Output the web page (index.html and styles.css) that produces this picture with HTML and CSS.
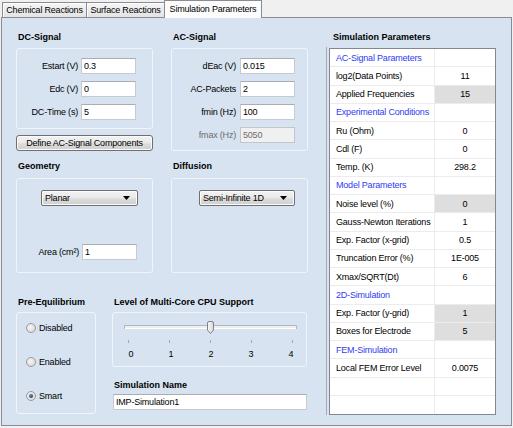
FILE: index.html
```html
<!DOCTYPE html>
<html>
<head>
<meta charset="utf-8">
<link rel="stylesheet" href="styles.css">
</head>
<body>
<div class="tabs">
  <div class="tab t1">Chemical Reactions</div>
  <div class="tab t2">Surface Reactions</div>
  <div class="tab active">Simulation Parameters</div>
</div>
<div class="page">
  <div class="left">
    <div class="row row1">
      <div class="col">
        <div class="title">DC-Signal</div>
        <div class="box form dc">
          <span class="lbl">Estart (V)</span><div class="input">0.3</div>
          <span class="lbl">Edc (V)</span><div class="input">0</div>
          <span class="lbl">DC-Time (s)</span><div class="input">5</div>
        </div>
        <div class="button">Define AC-Signal Components</div>
      </div>
      <div class="col">
        <div class="title">AC-Signal</div>
        <div class="box form ac">
          <span class="lbl">dEac (V)</span><div class="input">0.015</div>
          <span class="lbl">AC-Packets</span><div class="input">2</div>
          <span class="lbl">fmin (Hz)</span><div class="input">100</div>
          <span class="lbl disabled">fmax (Hz)</span><div class="input disabled">5050</div>
        </div>
      </div>
    </div>
    <div class="row row2">
      <div class="col">
        <div class="title">Geometry</div>
        <div class="box geo">
          <div class="combo planar"><span>Planar</span><svg class="arrow" width="7" height="4" viewBox="0 0 7 4"><path d="M0 0H7L3.5 4Z"/></svg></div>
          <div class="form area">
            <span class="lbl">Area (cm²)</span><div class="input">1</div>
          </div>
        </div>
      </div>
      <div class="col">
        <div class="title">Diffusion</div>
        <div class="box diff">
          <div class="combo semi"><span>Semi-Infinite 1D</span><svg class="arrow" width="7" height="4" viewBox="0 0 7 4"><path d="M0 0H7L3.5 4Z"/></svg></div>
        </div>
      </div>
    </div>
    <div class="row row3">
      <div class="col pre">
        <div class="title">Pre-Equilibrium</div>
        <div class="box radios">
          <div class="radio"><span class="dot"></span>Disabled</div>
          <div class="radio"><span class="dot"></span>Enabled</div>
          <div class="radio"><span class="dot checked"></span>Smart</div>
        </div>
      </div>
      <div class="col cpu">
        <div class="title">Level of Multi-Core CPU Support</div>
        <div class="box slider">
          <svg class="track" width="193" height="35" viewBox="0 0 193 35">
            <defs>
              <linearGradient id="tg" x1="0" y1="0" x2="1" y2="0">
                <stop offset="0" stop-color="#fafafa"/>
                <stop offset="1" stop-color="#d6d6d6"/>
              </linearGradient>
            </defs>
            <rect x="11.5" y="12.5" width="172" height="3" fill="#eef0f0" stroke="#b4b8bc"/>
            <line x1="12" y1="15.5" x2="183" y2="15.5" stroke="#ffffff"/>
            <g stroke="#a9a9a9" stroke-width="1">
              <line x1="15.5" y1="27" x2="15.5" y2="30"/>
              <line x1="56.5" y1="27" x2="56.5" y2="30"/>
              <line x1="97.5" y1="27" x2="97.5" y2="30"/>
              <line x1="138.5" y1="27" x2="138.5" y2="30"/>
              <line x1="179.5" y1="27" x2="179.5" y2="30"/>
            </g>
            <path d="M94.5 10 Q94.5 8.5 96 8.5 H99 Q100.5 8.5 100.5 10 V17 L97.5 20.5 L94.5 17 Z" fill="url(#tg)" stroke="#7f8387"/>
          </svg>
          <div class="ticks"><span>0</span><span>1</span><span>2</span><span>3</span><span>4</span></div>
        </div>
        <div class="title name-title">Simulation Name</div>
        <div class="input name">IMP-Simulation1</div>
      </div>
    </div>
  </div>
  <div class="right">
    <div class="title">Simulation Parameters</div>
    <div class="frame">
      <div class="pgrid">
        <div class="c cat">AC-Signal Parameters</div><div class="v"></div>
        <div class="c">log2(Data Points)</div><div class="v">11</div>
        <div class="c">Applied Frequencies</div><div class="v hl">15</div>
        <div class="c cat">Experimental Conditions</div><div class="v"></div>
        <div class="c">Ru (Ohm)</div><div class="v">0</div>
        <div class="c">Cdl (F)</div><div class="v">0</div>
        <div class="c">Temp. (K)</div><div class="v">298.2</div>
        <div class="c cat">Model Parameters</div><div class="v"></div>
        <div class="c">Noise level (%)</div><div class="v hl">0</div>
        <div class="c">Gauss-Newton Iterations</div><div class="v">1</div>
        <div class="c">Exp. Factor (x-grid)</div><div class="v">0.5</div>
        <div class="c">Truncation Error (%)</div><div class="v">1E-005</div>
        <div class="c">Xmax/SQRT(Dt)</div><div class="v">6</div>
        <div class="c cat">2D-Simulation</div><div class="v"></div>
        <div class="c">Exp. Factor (y-grid)</div><div class="v hl">1</div>
        <div class="c">Boxes for Electrode</div><div class="v hl">5</div>
        <div class="c cat">FEM-Simulation</div><div class="v"></div>
        <div class="c">Local FEM Error Level</div><div class="v">0.0075</div>
        <div class="c"></div><div class="v"></div>
        <div class="c last"></div><div class="v last"></div>
      </div>
    </div>
  </div>
</div>
</body>
</html>
```

FILE: styles.css
```css
* { box-sizing: border-box; }
html, body { margin: 0; padding: 0; }
body {
  width: 513px;
  height: 428px;
  overflow: hidden;
  background: #f0f0f0;
  font-family: "Liberation Sans", Arial, sans-serif;
  font-size: 9px;
  letter-spacing: -0.2px;
  color: #000;
}

/* tabs */
.tabs { display: flex; align-items: flex-end; height: 17px; padding-left: 2px; }
.tab {
  height: 15px;
  line-height: 14px;
  border: 1px solid #898c95;
  border-bottom: none;
  background: linear-gradient(#f5f5f5, #e3e3e3);
  box-shadow: inset 1px 1px 0 #fdfdfd;
  text-align: center;
  margin-right: -1px;
  white-space: nowrap;
}
.tab.t1 { width: 85px; }
.tab.t2 { width: 79px; }
.tab.active {
  width: 98px;
  height: 18px;
  line-height: 16px;
  margin-bottom: -1px;
  background: #fcfcfc;
  box-shadow: none;
  position: relative;
  z-index: 1;
}

/* page */
.page {
  margin-left: 1px;
  width: 511px;
  height: 409px;
  border: 1px solid #898c95;
  background: #d7e3f1;
  display: flex;
}
.left { width: 324px; padding: 14px 18px 0 14px; }
.row { display: flex; gap: 18px; }
.col { width: 137px; }

.title { font-weight: bold; height: 11px; line-height: 11px; margin-bottom: 5px; white-space: nowrap; letter-spacing: 0; padding-left: 2px; }
.row2 { margin-top: 10px; }
.row2 .title { margin-bottom: 6px; }
.row3 { margin-top: 24px; gap: 16px; }
.row3 .title { margin-bottom: 4px; }

.box {
  border: 1px solid #f1f5fa;
  border-radius: 3px;
}

.form { display: grid; align-items: center; row-gap: 7px; column-gap: 3px; }
.dc { grid-template-columns: 61px 55px; padding: 9px 0 8px; }
.ac { grid-template-columns: 64px 55px; column-gap: 4px; padding: 9px 0 7px; }
.lbl { text-align: right; white-space: nowrap; }
.lbl.disabled { color: #6d6d6d; }

.input {
  height: 16px;
  line-height: 14px;
  padding-left: 2px;
  background: #fff;
  border: 1px solid #c5cbd3;
  border-top-color: #abadb3;
  white-space: nowrap;
}
.input.disabled { background: #f0f0f0; color: #6d6d6d; border-color: #c2c6cc; }

.button {
  margin-top: 6px;
  height: 16px;
  line-height: 14px;
  text-align: center;
  border: 1px solid #707070;
  border-radius: 3px;
  background: linear-gradient(#f2f2f2 0%, #ebebeb 45%, #dddddd 55%, #cfcfcf 100%);
  box-shadow: inset 0 0 0 1px #fbfbfb;
  white-space: nowrap;
}

.geo, .diff { height: 95px; padding-top: 11px; }
.combo {
  display: flex;
  align-items: center;
  justify-content: space-between;
  height: 16px;
  padding: 0 7px 0 3px;
  border: 1px solid #707070;
  border-radius: 2px;
  background: linear-gradient(#f2f2f2 0%, #ebebeb 45%, #dddddd 55%, #cfcfcf 100%);
  box-shadow: inset 0 0 0 1px #fbfbfb;
  white-space: nowrap;
}
.combo .arrow { fill: #000; }
.planar { width: 97px; margin-left: 24px; }
.semi { width: 96px; margin-left: 27px; }
.area { grid-template-columns: 62px 55px; margin-top: 38px; }

.pre { width: 80px; }
.cpu { width: 195px; }
.radios { height: 102px; padding: 10px 0 0 9px; display: flex; flex-direction: column; gap: 24px; }
.radio { display: flex; align-items: center; gap: 3px; height: 10px; line-height: 10px; }
.dot {
  width: 10px;
  height: 10px;
  border-radius: 50%;
  border: 1px solid #9a9a9a;
  background: radial-gradient(circle at 40% 40%, #f7f7f7 0%, #dcdcdc 70%, #cfcfcf 100%);
  display: flex;
  align-items: center;
  justify-content: center;
}
.dot.checked::after {
  content: "";
  width: 4px;
  height: 4px;
  border-radius: 50%;
  background: radial-gradient(circle at 35% 35%, #6b8fc0 0%, #23406d 70%);
}

.slider { height: 55px; }
.track { display: block; }
.ticks { display: grid; grid-template-columns: repeat(5, 20px); column-gap: 20px; padding-left: 8px; height: 11px; line-height: 11px; margin-top: 1px; }
.ticks span { text-align: center; }
.name-title { margin-top: 13px; }
.row3 .name-title { margin-bottom: 3px; }
.input.name { width: 194px; margin-left: 1px; }

/* right */
.right { width: 184px; padding-top: 14px; }
.right .title { padding-left: 7px; margin-bottom: 4px; }
.frame { border-left: 1px solid #a3abb7; padding: 1px 0 0 2px; height: 368px; }
.pgrid {
  width: 167px;
  height: 367px;
  border: 1px solid #828790;
  background: #fff;
  display: grid;
  grid-template-columns: 104px 1fr;
  grid-template-rows: repeat(20, 1fr);
}
.c, .v { border-bottom: 1px solid #ececec; display: flex; align-items: center; white-space: nowrap; }
.c { padding-left: 6px; }
.v { border-left: 1px solid #ececec; justify-content: center; }
.v.hl { background: #dedede; }
.cat { color: #2f3cf0; }
.last { border-bottom: none; }
```
